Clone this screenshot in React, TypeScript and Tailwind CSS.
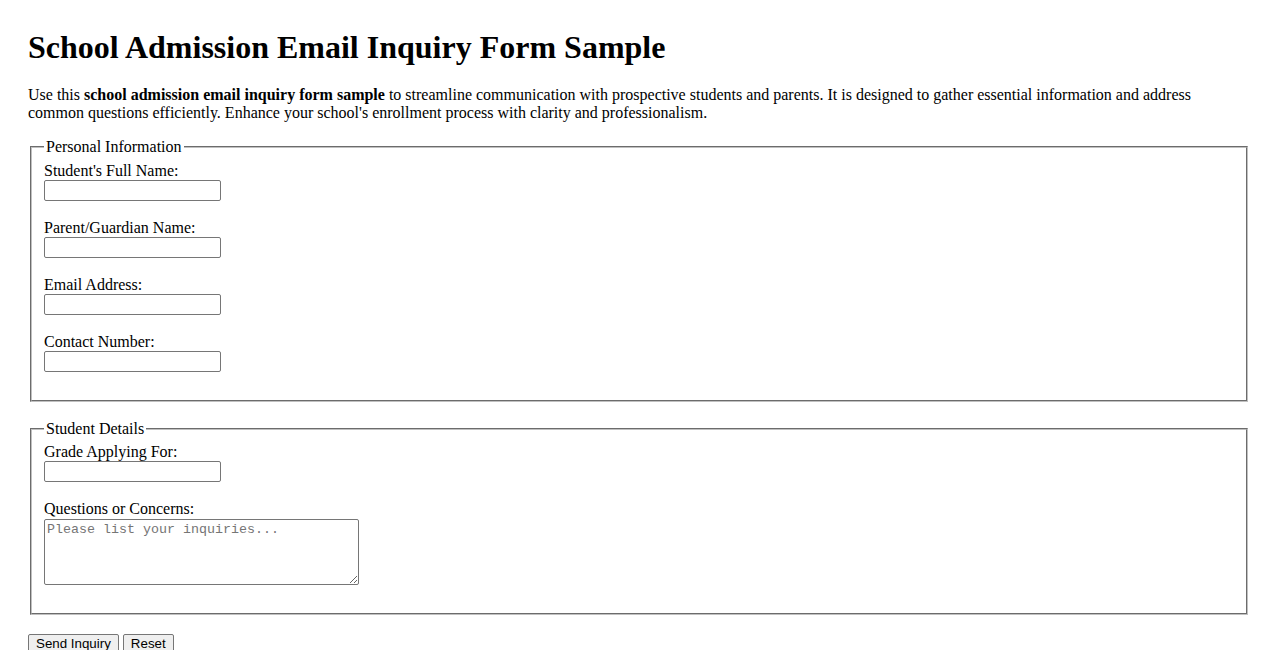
const serif = "font-['Liberation_Serif','Times_New_Roman',serif]";

const fields = [
  { id: "studentName", label: "Student's Full Name:" },
  { id: "parentName", label: "Parent/Guardian Name:" },
  { id: "email", label: "Email Address:" },
  { id: "phone", label: "Contact Number:" },
];

const Field = ({ id, label }: { id: string; label: string }) => (
  <div className="mb-[18px]">
    <label htmlFor={id} className="block">
      {label}
    </label>
    <input
      id={id}
      type="text"
      className="block h-[21px] w-[177px] rounded-[2px] border border-[#767676] bg-white px-[2px] font-['Liberation_Sans',Arial,sans-serif] text-[13.33px]"
    />
  </div>
);

const btn =
  "rounded-[2px] border border-[#767676] bg-[#efefef] px-[7px] py-[1px] font-['Liberation_Sans',Arial,sans-serif] text-[13.33px] leading-[normal]";

export default function App() {
  return (
    <div className={`${serif} bg-white px-7 pt-2 pb-2 text-[16px] leading-[normal] text-black`}>
      <h1 className="mt-[21.44px] mb-[19.5px] text-[32px] font-bold">
        School Admission Email Inquiry Form Sample
      </h1>
      <p className="mb-4">
        Use this <strong className="font-bold">school admission email inquiry form sample</strong> to
        streamline communication with prospective students and parents. It is designed to gather
        essential information and address common questions efficiently. Enhance your school's
        enrollment process with clarity and professionalism.
      </p>

      <form onSubmit={(e) => e.preventDefault()}>
        <fieldset className="mx-[2px] border-2 border-[#c0c0c0] [border-style:groove] px-3 pt-[5.6px] pb-[10px]">
          <legend className="px-[2px]">Personal Information</legend>
          {fields.map((f) => (
            <Field key={f.id} {...f} />
          ))}
        </fieldset>

        <fieldset className="mx-[2px] mt-[18px] border-2 border-[#c0c0c0] [border-style:groove] px-3 pt-[5.6px] pb-[10px]">
          <legend className="px-[2px]">Student Details</legend>
          <Field id="grade" label="Grade Applying For:" />
          <div className="mb-[18px]">
            <label htmlFor="questions" className="block">
              Questions or Concerns:
            </label>
            <textarea
              id="questions"
              placeholder="Please list your inquiries..."
              className="mt-[1px] block h-[66px] w-[315px] rounded-[2px] border border-[#767676] bg-white px-[2px] py-[2px] font-['Liberation_Mono','Courier_New',monospace] text-[13.33px] leading-[normal] placeholder:text-[#757575]"
            />
          </div>
        </fieldset>

        <div className="mt-[19px] flex gap-1">
          <button type="submit" className={btn}>
            Send Inquiry
          </button>
          <button type="reset" className={btn}>
            Reset
          </button>
        </div>
      </form>
    </div>
  );
}
